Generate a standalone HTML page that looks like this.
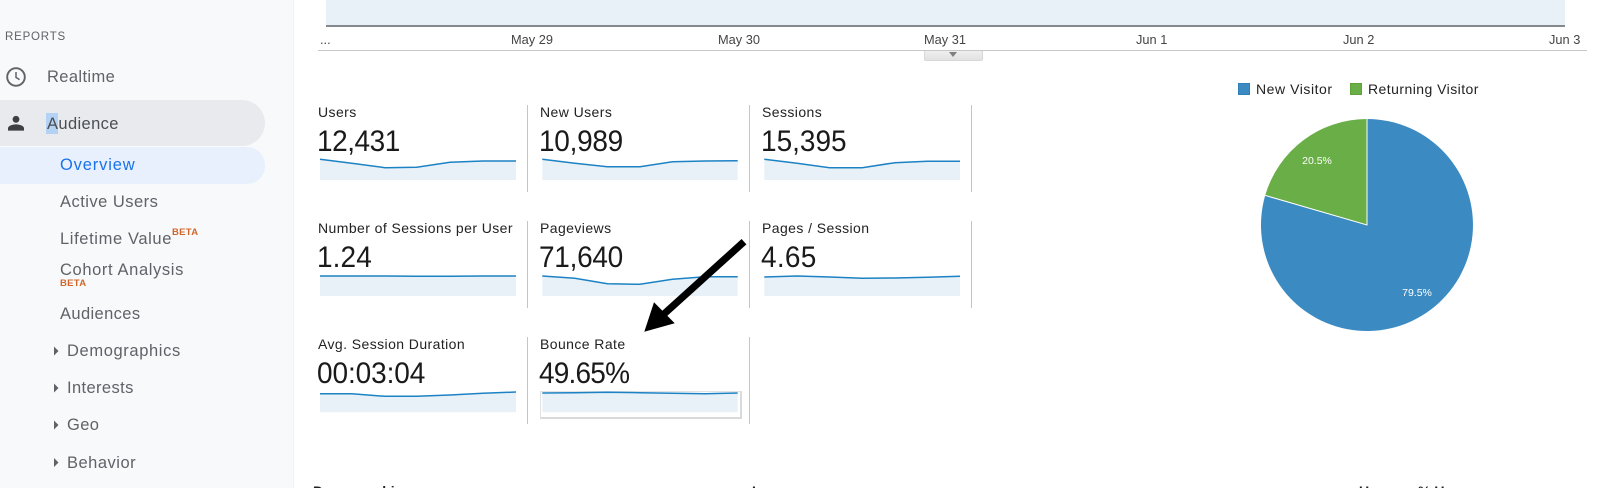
<!DOCTYPE html>
<html><head><meta charset="utf-8">
<style>
html,body{margin:0;padding:0;background:#fff;width:1600px;height:488px;overflow:hidden}
body{font-family:"Liberation Sans",Arial,sans-serif}
#wrap{position:relative;width:1600px;height:488px;overflow:hidden;background:#fff}
.a{position:absolute;white-space:nowrap}
#side{position:absolute;left:0;top:0;width:293px;height:488px;background:#f8f9fb;border-right:1px solid #f0f1f3}
.n{position:absolute;white-space:nowrap;color:#5f6368;font-size:16.5px;line-height:20px;letter-spacing:.38px}
.m{letter-spacing:.62px}
.b{position:absolute;white-space:nowrap;color:#d2662a;font-size:9.5px;font-weight:bold;line-height:10px;letter-spacing:.3px}
.d{position:absolute;top:32px;font-size:12.8px;line-height:15px;color:#444;white-space:nowrap}
.l{position:absolute;font-size:14px;line-height:16px;color:#222;white-space:nowrap;letter-spacing:.42px}
.v{position:absolute;font-size:30px;line-height:32px;color:#1a1a1a;white-space:nowrap;letter-spacing:-.5px;transform:scaleX(.933);transform-origin:0 50%}
.s{position:absolute;width:1px;height:87px;background:#c4c4c4}
</style></head><body><div id="wrap">
<div id="side"></div>
<div class="a" style="left:5px;top:30px;font-size:11.5px;line-height:14px;color:#5f6368;letter-spacing:.8px">REPORTS</div>
<svg class="a" style="left:0;top:60px" width="40" height="110" viewBox="0 60 40 110">
<circle cx="16" cy="77" r="8.800" fill="none" stroke="#5f6368" stroke-width="1.900"/>
<path d="M16 72v5.400l3.600 2.200" fill="none" stroke="#5f6368" stroke-width="1.500"/>
</svg>
<div class="n" style="left:47px;top:67px">Realtime</div>
<div class="a" style="left:-30px;top:100px;width:295px;height:46px;background:#e8eaed;border-radius:0 23px 23px 0"></div>
<div class="a" style="left:46px;top:113px;width:12px;height:21px;background:#b4d3f4"></div>
<svg class="a" style="left:8px;top:115px" width="16" height="16" viewBox="0 0 16 16">
<circle cx="8" cy="4.300" r="3.400" fill="#3c4043"/><path d="M0 15.600v-2.300c0-2.600 5-3.900 8-3.900s8 1.300 8 3.900v2.300z" fill="#3c4043"/>
</svg>
<div class="n" style="left:47px;top:114px;color:#4a4e52">Audience</div>
<div class="a" style="left:-30px;top:147px;width:295px;height:37px;background:#e8f0fe;border-radius:0 18px 18px 0"></div>
<div class="n m" style="left:60px;top:155px;color:#1a73e8;letter-spacing:.85px">Overview</div>
<div class="n" style="left:60px;top:192px;letter-spacing:.48px">Active Users</div>
<div class="n m" style="left:60px;top:229px">Lifetime Value</div>
<div class="b" style="left:172px;top:228px">BETA</div>
<div class="n m" style="left:60px;top:260px">Cohort Analysis</div>
<div class="b" style="left:60px;top:279px">BETA</div>
<div class="n" style="left:60px;top:304px">Audiences</div>
<div class="n m" style="left:67px;top:341px">Demographics</div>
<div class="n" style="left:67px;top:378px">Interests</div>
<div class="n" style="left:67px;top:415px">Geo</div>
<div class="n" style="left:67px;top:453px;letter-spacing:.5px">Behavior</div>
<svg class="a" style="left:50px;top:340px" width="12" height="130" viewBox="0 340 12 130">
<path d="M4 346.500l4.500 4.500-4.500 4.500zM4 383.500l4.500 4.500-4.500 4.500zM4 420.500l4.500 4.500-4.500 4.500zM4 458l4.500 4.500-4.500 4.500z" fill="#5f6368"/>
</svg>

<div class="a" style="left:326px;top:0;width:1239px;height:25px;background:#e9f1f8"></div>
<div class="a" style="left:326px;top:25px;width:1239px;height:2px;background:#85898d"></div>
<div class="d" style="left:320px">...</div>
<div class="d" style="left:511px">May 29</div>
<div class="d" style="left:718px">May 30</div>
<div class="d" style="left:924px">May 31</div>
<div class="d" style="left:1136px">Jun 1</div>
<div class="d" style="left:1343px">Jun 2</div>
<div class="d" style="left:1549px">Jun 3</div>
<div class="a" style="left:318px;top:50px;width:1269px;height:1px;background:#c8c8c8"></div>
<div class="a" style="left:924px;top:51px;width:57px;height:9px;background:linear-gradient(#efefef,#e2e2e2);border:1px solid #d8d8d8;border-top:0;border-radius:0 0 2px 2px"></div>
<svg class="a" style="left:949px;top:52px" width="8" height="5"><path d="M0 0h8L4 5z" fill="#808080"/></svg>

<div class="l" style="left:318px;top:104px">Users</div>
<div class="v" style="left:317px;top:126px">12,431</div>
<div class="l" style="left:540px;top:104px">New Users</div>
<div class="v" style="left:539px;top:126px;letter-spacing:-.3px">10,989</div>
<div class="l" style="left:762px;top:104px">Sessions</div>
<div class="v" style="left:761px;top:126px;letter-spacing:0">15,395</div>
<div class="l" style="left:318px;top:220px">Number of Sessions per User</div>
<div class="v" style="left:317px;top:242px;letter-spacing:.1px">1.24</div>
<div class="l" style="left:540px;top:220px">Pageviews</div>
<div class="v" style="left:539px;top:242px;letter-spacing:-.3px">71,640</div>
<div class="l" style="left:762px;top:220px">Pages / Session</div>
<div class="v" style="left:761px;top:242px;letter-spacing:.3px">4.65</div>
<div class="l" style="left:318px;top:336px">Avg. Session Duration</div>
<div class="v" style="left:317px;top:358px;letter-spacing:-.1px">00:03:04</div>
<div class="l" style="left:540px;top:336px">Bounce Rate</div>
<div class="v" style="left:539px;top:358px;letter-spacing:-.85px">49.65%</div>

<div class="s" style="left:527px;top:105px"></div><div class="s" style="left:749px;top:105px"></div><div class="s" style="left:971px;top:105px"></div>
<div class="s" style="left:527px;top:221px"></div><div class="s" style="left:749px;top:221px"></div><div class="s" style="left:971px;top:221px"></div>
<div class="s" style="left:527px;top:337px"></div><div class="s" style="left:749px;top:337px"></div>

<div class="a" style="left:540px;top:391px;width:199px;height:25px;background:#fff;border:1px solid #e2e2e2;border-right:2px solid #dadada;border-bottom:2px solid #dadada"></div>

<svg class="a" style="left:0;top:0" width="1600" height="488" viewBox="0 0 1600 488">
<g fill="#e9f1f8">
<path d="M320 159.300L351.700 163.300 385 167.700 416.700 167.300 450 162.300 483 161 516 161V180H320z"/>
<path d="M542.300 159.300L574.800 163.300 607.400 166.700 640 166.700 672.500 161.700 705 161 737.700 160.700V180H542.300z"/>
<path d="M764.300 159.300L797 163.300 829.600 167.700 862.200 167.700 894.800 162.700 927.400 161.300 960 161.300V180H764.300z"/>
<path d="M320 276L351.700 276 385 276 416.700 276.300 450 276.300 483 276 516 276V296H320z"/>
<path d="M542.300 276L574.800 278.300 607.400 283.700 640 284.300 672.500 279.300 705 276.700 737.700 276.700V296H542.300z"/>
<path d="M764.300 277L797 276 829.600 277 862.200 278.300 894.800 278 927.400 277.300 960 276.300V296H764.300z"/>
<path d="M320 393.700L351.700 393.700 385 396.300 416.700 396.300 450 395 483 393.300 516 392V412.300H320z"/>
<path d="M542.300 393L574.800 392.700 607.400 392.300 640 392.700 672.500 393.300 705 393.700 737.700 393V412.300H542.300z"/>
</g>
<g fill="none" stroke="#1c82c4" stroke-width="1.500">
<path d="M320 159.300L351.700 163.300 385 167.700 416.700 167.300 450 162.300 483 161 516 161"/>
<path d="M542.300 159.300L574.800 163.300 607.400 166.700 640 166.700 672.500 161.700 705 161 737.700 160.700"/>
<path d="M764.300 159.300L797 163.300 829.600 167.700 862.200 167.700 894.800 162.700 927.400 161.300 960 161.300"/>
<path d="M320 276L351.700 276 385 276 416.700 276.300 450 276.300 483 276 516 276"/>
<path d="M542.300 276L574.800 278.300 607.400 283.700 640 284.300 672.500 279.300 705 276.700 737.700 276.700"/>
<path d="M764.300 277L797 276 829.600 277 862.200 278.300 894.800 278 927.400 277.300 960 276.300"/>
<path d="M320 393.700L351.700 393.700 385 396.300 416.700 396.300 450 395 483 393.300 516 392"/>
<path d="M542.300 393L574.800 392.700 607.400 392.300 640 392.700 672.500 393.300 705 393.700 737.700 393"/>
</g>
<path d="M744 241.700L664 314" stroke="#000" stroke-width="7.200" fill="none"/>
<path d="M654 302.300L674.700 323.300 644.300 331.700z" fill="#000"/>
<path d="M1367 225V119A106 106 0 1 1 1265.200 195.400z" fill="#3b8bc2"/>
<path d="M1367 225L1265.200 195.400A106 106 0 0 1 1367 119z" fill="#6aae47"/>
<path d="M1265.200 195.400L1367 225V119" fill="none" stroke="#fff" stroke-width="1"/>
<text x="1317" y="164" font-size="10.500" fill="#fff" text-anchor="middle" font-family="Liberation Sans">20.5%</text>
<text x="1417" y="296" font-size="10.500" fill="#fff" text-anchor="middle" font-family="Liberation Sans">79.5%</text>
</svg>

<div class="a" style="left:1238px;top:83px;width:10px;height:10px;background:#3b8bc2;border:1px solid #2f7fb8"></div>
<div class="l" style="left:1256px;top:81px;letter-spacing:.55px">New Visitor</div>
<div class="a" style="left:1350px;top:83px;width:10px;height:10px;background:#6aae47;border:1px solid #5ea23c"></div>
<div class="l" style="left:1368px;top:81px;letter-spacing:.45px">Returning Visitor</div>

<div class="a" style="left:313px;top:483px;font-size:14px;line-height:16px;font-weight:bold;color:#222">Demographics</div>
<div class="a" style="left:752px;top:483px;font-size:14px;line-height:16px;font-weight:bold;color:#222">Language</div>
<div class="a" style="left:1359px;top:483px;font-size:14px;line-height:16px;font-weight:bold;color:#222">Users</div>
<div class="a" style="left:1418px;top:483px;font-size:14px;line-height:16px;font-weight:bold;color:#222">% Users</div>
</div></body></html>
